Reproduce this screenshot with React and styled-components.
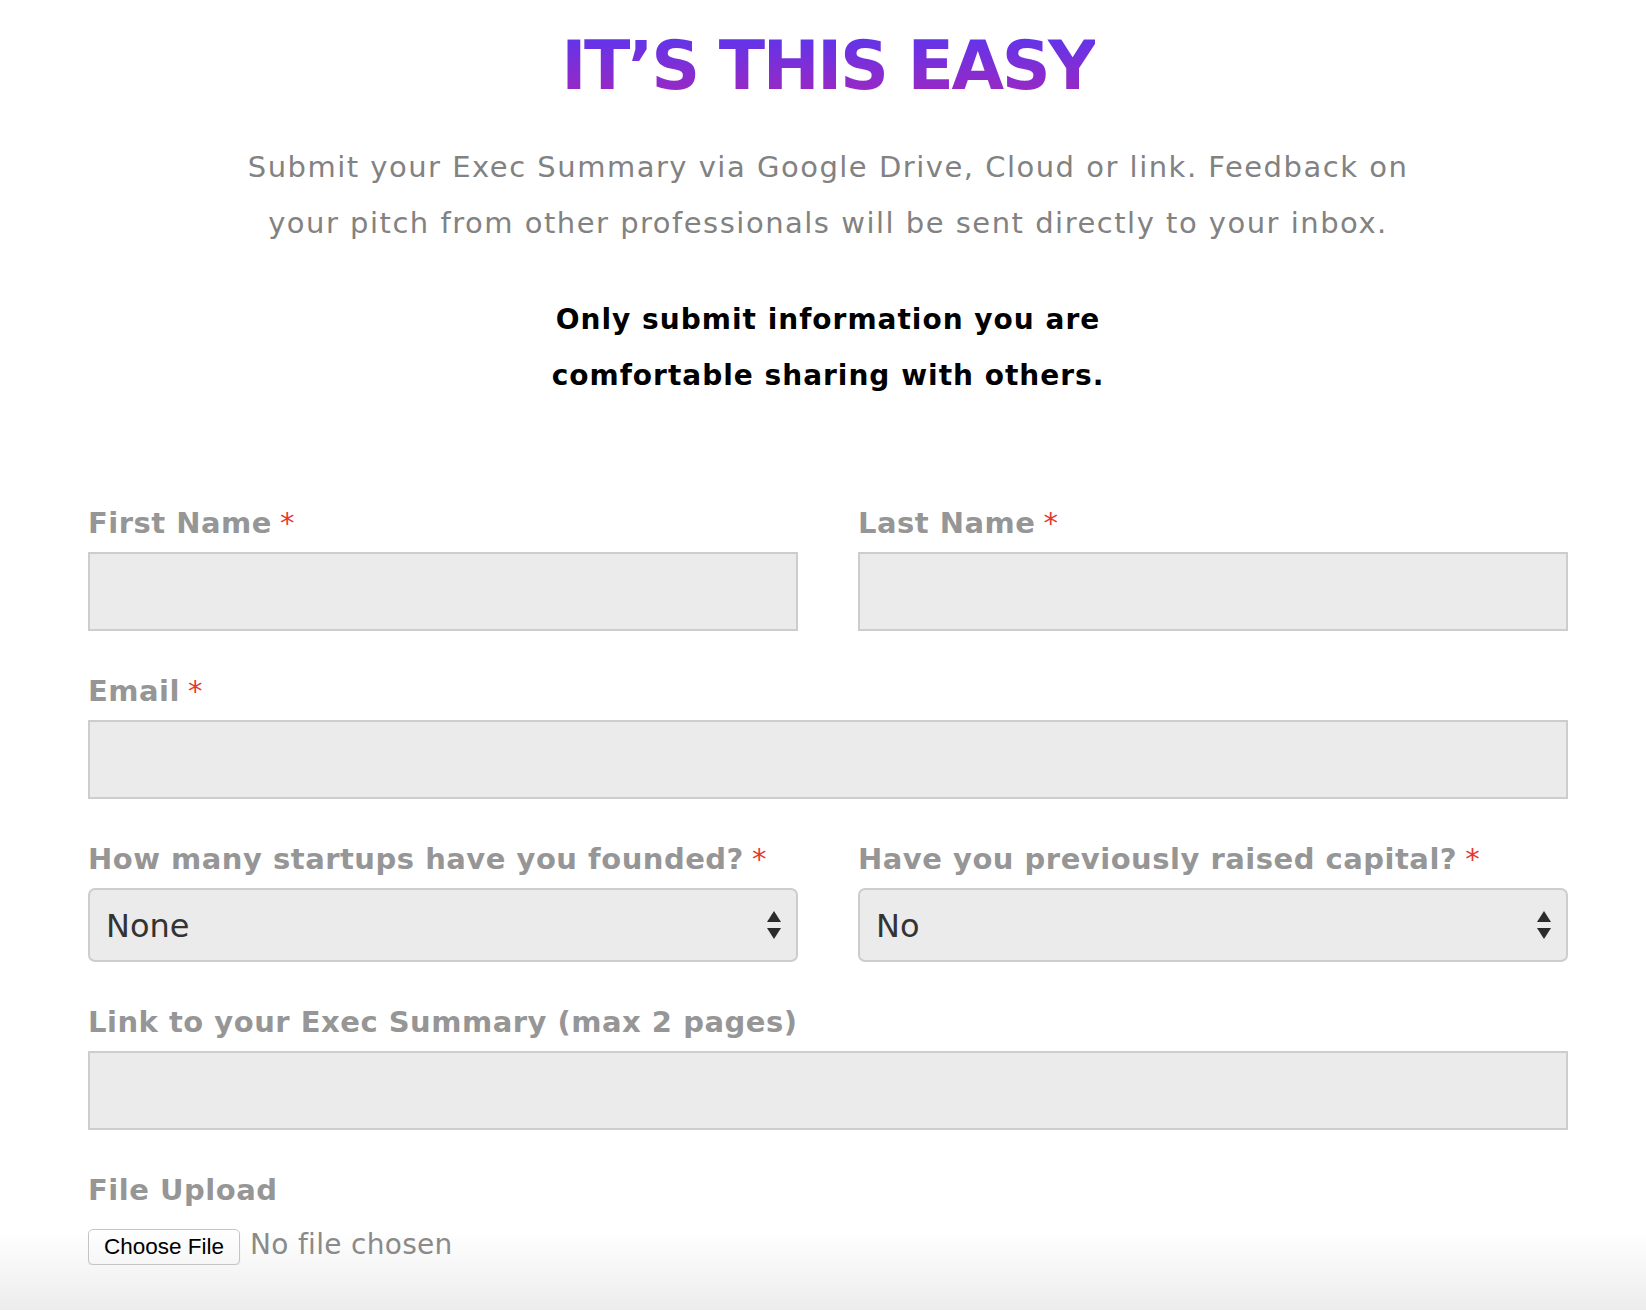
import React from "react"
import styled, { createGlobalStyle } from "styled-components"

const GlobalStyle = createGlobalStyle`
  html, body {
    margin: 0;
    padding: 0;
    background: #fff;
  }
  body {
    font-family: "DejaVu Sans", Verdana, sans-serif;
  }
`

const Page = styled.main`
  min-height: 1310px;
  box-sizing: border-box;
  padding: 21px 78px 40px 88px;
  background: linear-gradient(to bottom, #fff 0, #fff 1232px, #ececec 1310px);
`

const Header = styled.header`
  display: flex;
  flex-direction: column;
  align-items: center;
  text-align: center;
`

const Title = styled.h1`
  margin: 0;
  font-size: 68px;
  line-height: 90px;
  font-weight: 700;
  letter-spacing: -2.5px;
  background: linear-gradient(to bottom, #6334e9 20%, #9e27c0 85%);
  -webkit-background-clip: text;
  background-clip: text;
  color: transparent;
`

const Intro = styled.p`
  margin: 28px 0 0;
  font-size: 29px;
  line-height: 56px;
  letter-spacing: 1.5px;
  color: #828282;
`

const Line = styled.span`
  display: block;
`

const Notice = styled.p`
  margin: 41px 0 0;
  font-size: 28px;
  line-height: 56px;
  font-weight: 700;
  letter-spacing: 1px;
  color: #000;
`

const Form = styled.form`
  display: flex;
  flex-direction: column;
  gap: 42px;
  margin-top: 101px;
  width: 1480px;
`

const Row = styled.div`
  display: grid;
  grid-template-columns: 1fr 1fr;
  column-gap: 60px;
`

const Field = styled.div`
  display: flex;
  flex-direction: column;
  gap: ${(p) => p.$gap || 11}px;
`

const Label = styled.label`
  font-size: 29px;
  line-height: 36px;
  font-weight: 700;
  letter-spacing: 0.5px;
  color: #969696;
`

const Required = styled.span`
  color: #e8372c;
  font-weight: 400;
  margin-left: 8px;
`

const TextInput = styled.input`
  box-sizing: border-box;
  width: 100%;
  height: 79px;
  margin: 0;
  border: 2px solid #cdcdcd;
  background: #ebebeb;
  font-family: inherit;
  font-size: 28px;
  padding: 0 16px;
  outline: none;
`

const SelectWrap = styled.div`
  position: relative;
`

const Select = styled.select`
  box-sizing: border-box;
  width: 100%;
  height: 74px;
  margin: 0;
  appearance: none;
  -webkit-appearance: none;
  border: 2px solid #cdcdcd;
  border-radius: 7px;
  background: #ebebeb;
  font-family: inherit;
  font-size: 32px;
  color: #333;
  padding: 2px 16px 0;
  outline: none;
`

const Arrows = styled.svg`
  position: absolute;
  right: 16px;
  top: 50%;
  transform: translateY(-50%);
  pointer-events: none;
`

const FileInput = styled.input`
  font-family: inherit;
  font-size: 28px;
  letter-spacing: 0.3px;
  color: #8a8a8a;
  margin: 0;

  &::file-selector-button {
    font-family: "Liberation Sans", Arial, sans-serif;
    font-size: 22.5px;
    letter-spacing: 0;
    color: #000;
    background: linear-gradient(to bottom, #fff, #f6f6f6);
    border: 1px solid #c4c4c4;
    border-radius: 5px;
    padding: 4px 15px 4px;
    margin-right: 10px;
    box-shadow: 0 1px 1px rgba(0, 0, 0, 0.12);
  }
`

const ArrowIcon = () => (
  <Arrows width="16" height="30" viewBox="0 0 16 30">
    <path d="M8 1 L15 12 L1 12 Z" fill="#2b2b2b" />
    <path d="M1 18 L15 18 L8 29 Z" fill="#2b2b2b" />
  </Arrows>
)

const App = () => {
  return (
    <>
      <GlobalStyle />
      <Page>
        <Header>
          <Title>IT’S THIS EASY</Title>
          <Intro>
            <Line>Submit your Exec Summary via Google Drive, Cloud or link. Feedback on</Line>
            <Line>your pitch from other professionals will be sent directly to your inbox.</Line>
          </Intro>
          <Notice>
            <Line>Only submit information you are</Line>
            <Line>comfortable sharing with others.</Line>
          </Notice>
        </Header>

        <Form onSubmit={(e) => e.preventDefault()}>
          <Row>
            <Field>
              <Label htmlFor="first">
                First Name<Required>*</Required>
              </Label>
              <TextInput id="first" type="text" />
            </Field>
            <Field>
              <Label htmlFor="last">
                Last Name<Required>*</Required>
              </Label>
              <TextInput id="last" type="text" />
            </Field>
          </Row>

          <Field>
            <Label htmlFor="email">
              Email<Required>*</Required>
            </Label>
            <TextInput id="email" type="email" />
          </Field>

          <Row>
            <Field>
              <Label htmlFor="startups">
                How many startups have you founded?<Required>*</Required>
              </Label>
              <SelectWrap>
                <Select id="startups" defaultValue="None">
                  <option>None</option>
                  <option>1</option>
                  <option>2</option>
                  <option>3+</option>
                </Select>
                <ArrowIcon />
              </SelectWrap>
            </Field>
            <Field>
              <Label htmlFor="capital">
                Have you previously raised capital?<Required>*</Required>
              </Label>
              <SelectWrap>
                <Select id="capital" defaultValue="No">
                  <option>No</option>
                  <option>Yes</option>
                </Select>
                <ArrowIcon />
              </SelectWrap>
            </Field>
          </Row>

          <Field>
            <Label htmlFor="link">Link to your Exec Summary (max 2 pages)</Label>
            <TextInput id="link" type="url" />
          </Field>

          <Field $gap={20}>
            <Label htmlFor="file">File Upload</Label>
            <div>
              <FileInput id="file" type="file" />
            </div>
          </Field>
        </Form>
      </Page>
    </>
  )
}

export default App
